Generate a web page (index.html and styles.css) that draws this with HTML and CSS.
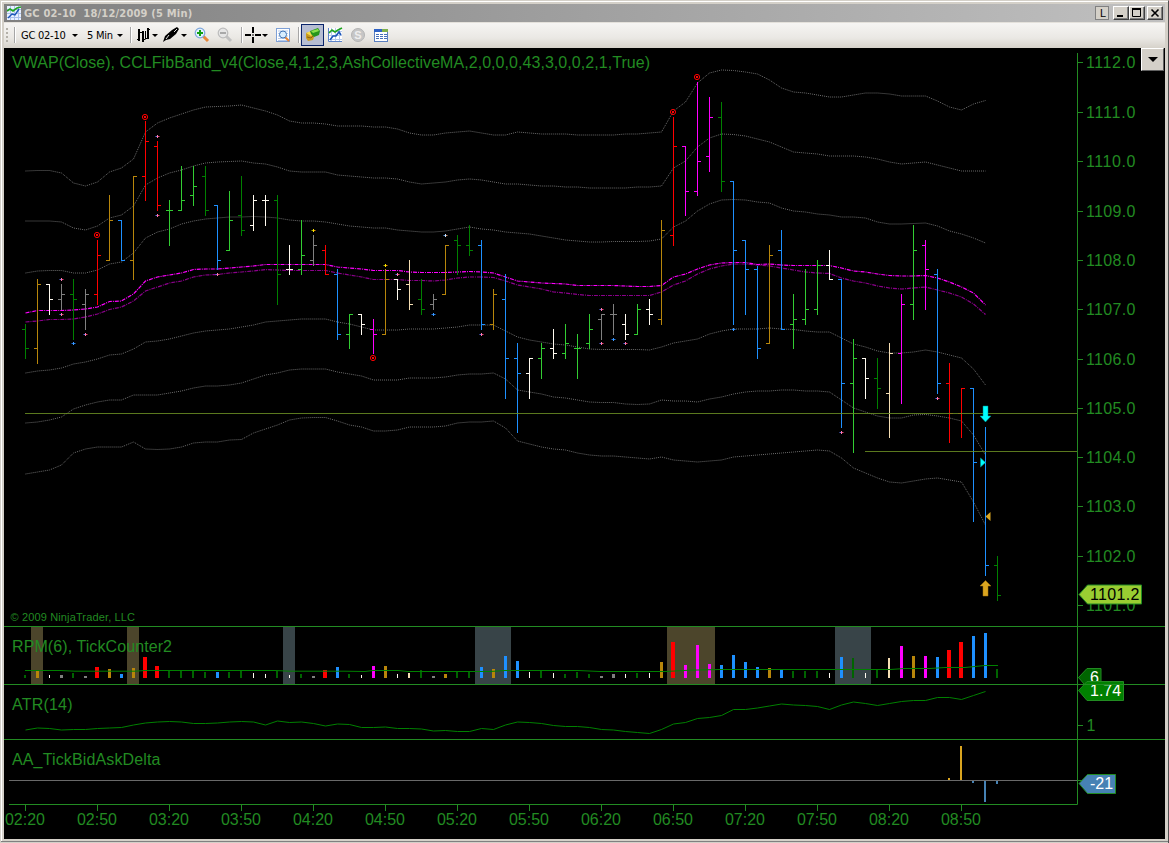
FILE: index.html
```html
<!DOCTYPE html>
<html lang="en">

<head>
    <meta charset="UTF-8">
    <meta name="viewport" content="width=device-width, initial-scale=1.0">
    <title>GC 02-10 18/12/2009 (5 Min)</title>
    <link rel="stylesheet" href="styles.css">
</head>

<body>

    <div class="window">

        <div class="titlebar">
            <svg class="title-icon" width="14" height="14" viewBox="0 0 14 14">
                <rect width="14" height="14" fill="#e8f0ff"/>
                <path d="M0 3.5h14M0 7.5h14M0 11.5h14M3.5 0v14M7.5 0v14M11.5 0v14" stroke="#a9c0ea" fill="none"/>
                <path d="M0 5l3-2 3 2 4-3 4-1" stroke="#1fa51f" stroke-width="1.6" fill="none"/>
                <path d="M1 12l4-4 3 1 4-6" stroke="#1c56b8" stroke-width="1.4" fill="none"/>
            </svg>
            <span class="title">GC 02-10&nbsp; 18/12/2009 (5 Min)</span>
            <div class="title-buttons">
                <span class="link-btn">L</span>
                <span class="win-btn"><svg width="12" height="10"><path d="M2 8h6" stroke="#000" stroke-width="2"/></svg></span>
                <span class="win-btn"><svg width="12" height="10"><path d="M1.5 1v7.5h8V1M1 1h9" stroke="#000" fill="none"/><path d="M1 1h9" stroke="#000" stroke-width="2"/></svg></span>
                <span class="win-btn close"><svg width="12" height="10"><path d="M2.5 1.5l7 7M9.5 1.5l-7 7" stroke="#000" stroke-width="1.6"/></svg></span>
            </div>
        </div>

        <div class="toolbar">
            <span class="grip"></span>
            <span class="sep sep-first"></span>
            <span class="label instrument">GC 02-10</span>
            <span class="arrow"></span>
            <span class="label interval">5 Min</span>
            <span class="arrow"></span>
            <span class="sep sep-wide"></span>
            <svg class="tool" width="15" height="16" viewBox="0 0 15 16">
                <path d="M3 2v12M7 4v11M12 1v11" stroke="#000" stroke-width="2" fill="none"/>
                <path d="M1 12.500h2M3 5.500h4M7 12.500h2M9.500 4v8.500M9 11.500h3M12 2.500h2" stroke="#000" fill="none"/>
            </svg>
            <span class="arrow"></span>
            <svg class="tool pen" width="17" height="16" viewBox="0 0 17 16">
                <path d="M0 15l2-6 7-6 5-3 2 2-3 5-6 5-4 1z" fill="#000"/>
                <path d="M3 12l3-4M11 5l3-3" stroke="#ddd"/>
            </svg>
            <span class="arrow"></span>
            <svg class="tool zoom-in" width="16" height="16" viewBox="0 0 16 16">
                <path d="M9 9l5 5" stroke="#e8873a" stroke-width="3"/>
                <circle cx="6" cy="6" r="4.800" fill="#e3f1ff" stroke="#7fa8dc" stroke-width="1.200"/>
                <path d="M3 6h6M6 3v6" stroke="#13a013" stroke-width="2"/>
            </svg>
            <svg class="tool gap" width="16" height="16" viewBox="0 0 16 16">
                <path d="M9 9l5 5" stroke="#c1c1c1" stroke-width="3"/>
                <circle cx="6" cy="6" r="4.800" fill="#e6e6e6" stroke="#bcbcbc" stroke-width="1.200"/>
                <path d="M3 6h6" stroke="#a9a9a9" stroke-width="2"/>
            </svg>
            <span class="sep sep-mid"></span>
            <svg class="tool" width="16" height="16" viewBox="0 0 16 16">
                <path d="M0 8h6M10 8h6M8 0v6M8 10v6" stroke="#000" stroke-width="2"/>
                <path d="M7 8h2" stroke="#000" stroke-width="1"/>
            </svg>
            <span class="arrow"></span>
            <svg class="tool zoom-in" width="16" height="16" viewBox="0 0 16 16">
                <rect x="1.500" y="1.500" width="13" height="13" fill="#fff" stroke="#7ea0d6"/>
                <path d="M3 4h10M3 6.500h10M3 9h10M3 11.500h10M3 13.500h10" stroke="#b7cbea"/>
                <path d="M10 10l4 4" stroke="#e8873a" stroke-width="2"/>
                <circle cx="8" cy="7.500" r="3.500" fill="#d9eeff" stroke="#3f74b8"/>
            </svg>
            <span class="sep sep-last"></span>
            <span class="pressed">
                <svg width="16" height="16" viewBox="0 0 16 16">
                    <path d="M1 6l6-2 3 3-2 6-5 1-2-3z" fill="#c99a1e"/>
                    <path d="M1 6l5-2 4 2-4 3z" fill="#f6dc4f"/>
                    <path d="M2 10l4 1 2-2" stroke="#8b6410" fill="none"/>
                    <path d="M5 4l8-3 2 3-1 4-5 2-3-3z" fill="#27951d"/>
                    <path d="M6 4l7-2 1 2-6 2z" fill="#8be04b"/>
                </svg>
            </span>
            <svg class="tool chart-icon" width="16" height="16" viewBox="0 0 16 16">
                <rect x="1" y="1" width="14" height="14" fill="#fff"/>
                <path d="M1 4.500h14M1 8.500h14M1 12.500h14M4.500 1v14M8.500 1v14M12.500 1v14" stroke="#b5c8ec" fill="none"/>
                <path d="M1.500 1v13.500H15" stroke="#5c83c9" fill="none"/>
                <path d="M2 6l3-3 3 2 3-2 4-2" stroke="#1fa51f" stroke-width="1.600" fill="none"/>
                <path d="M3 13l3-4 3 0 3-4 2 3" stroke="#1c56b8" stroke-width="1.600" fill="none"/>
            </svg>
            <svg class="tool gap" width="16" height="16" viewBox="0 0 16 16">
                <circle cx="8" cy="8" r="6.500" fill="#c6c6c6" stroke="#b4b4b4"/>
                <text class="dollar" x="8" y="12" text-anchor="middle">S</text>
            </svg>
            <svg class="tool gap" width="16" height="16" viewBox="0 0 16 16">
                <rect x="1.500" y="2.500" width="13" height="12" fill="#fff" stroke="#5a7fc0"/>
                <rect x="1" y="2" width="14" height="3" fill="#2f62c4"/>
                <rect x="9" y="2" width="6" height="3" fill="#7fb04a"/>
                <path d="M3 7.500h3M3 9.500h3M3 11.500h3M7 7.500h3M7 9.500h3M7 11.500h3M11 7.500h3M11 9.500h3M11 11.500h3" stroke="#4670b8"/>
            </svg>
        </div>

        <div class="chart-area">
            <!-- user units are window pixels -->
            <svg class="chart" width="1161" height="791" viewBox="4 48 1161 791">
                <g id="zones"></g>

                <g class="text">
                    <text x="12" y="68" textLength="638">VWAP(Close), CCLFibBand_v4(Close,4,1,2,3,AshCollectiveMA,2,0,0,0,43,3,0,0,2,1,True)</text>
                    <text x="12" y="652" textLength="160">RPM(6), TickCounter2</text>
                    <text x="12" y="710" textLength="60.500">ATR(14)</text>
                    <text x="12" y="765" textLength="148.500">AA_TickBidAskDelta</text>
                    <text class="copyright" x="10.500" y="621" textLength="124.500">© 2009 NinjaTrader, LLC</text>
                    <text x="1086.500" y="731">1</text>
                </g>

                <g id="bands"></g>
                <g id="bars"></g>
                <g id="rpm"></g>
                <g id="lines"></g>
                <g id="delta"></g>

                <path class="level" d="M25 413.500H1077M865 451.500H1077"/>
                <g id="markers"></g>

                <path d="M983 406h5v10h3l-5.500 6-5.500-6h3z" fill="#00ffff" stroke="#008b8b" stroke-width=".5"/>
                <path d="M980.500 458l5 4.500-5 4.500z" fill="#00ffff" stroke="#008b8b" stroke-width=".7"/>
                <path d="M990.500 512l-5 4.500 5 4.500z" fill="#daa520"/>
                <path d="M983 596h5v-10h3l-5.500-5.500-5.500 5.500h3z" fill="#daa520" stroke="#a87708" stroke-width=".5"/>

                <path class="zero" d="M9 780.500H1077"/>
                <path class="axis" d="M1077.500 53V804.500H9M1077 725.500h6M1077 780.500h6"/>
                <g id="axis"></g>

                <path class="tag last" d="M1079 594.500l8.500-9.500h54v19h-54z"/>
                <text class="tag-text dark" x="1090" y="600" textLength="49.500">1101.2</text>
                <path class="tag rpm" d="M1078.500 677.500l8.500-9h14v19h-14z"/>
                <text class="tag-text" x="1090" y="682.500">6</text>
                <path class="tag atr" d="M1078.500 690.500l8.500-9h36.500v19H1087z"/>
                <text class="tag-text" x="1090" y="696">1.74</text>
                <path class="tag delta" d="M1079 783.500l8.500-9h28v19h-28z"/>
                <text class="tag-text" x="1090" y="789">-21</text>
                <path class="axis" d="M4 626.500H1165M4 684.500H1165M4 739.500H1165"/>
            </svg>
            <span class="dropdown"><span class="arrow big"></span></span>
        </div>

    </div>

    <script src="script.js"></script>

</body>

</html>
```
FILE: styles.css
```css
html,
body {
    margin: 0;
    padding: 0;
    background: #d4d0c8;
    overflow: hidden;
}

.window {
    box-sizing: border-box;
    display: flex;
    flex-direction: column;
    width: 1169px;
    height: 843px;
    padding: 3px 3px 0;
    background: #d4d0c8;
    border-top: 1px solid #d4d0c8;
    border-left: 1px solid #d4d0c8;
    border-right: 1px solid #505050;
    box-shadow: inset 0 1px 0 #fff, inset 0 -1px 0 #d4d0c8, inset 0 -2px 0 #808080, inset 1px 0 0 #fff;
    font-family: "DejaVu Sans Condensed", "DejaVu Sans", sans-serif;
    font-size: 11px;
}

.titlebar {
    display: flex;
    align-items: center;
    height: 18px;
    padding: 0 2px 0 3px;
    background: linear-gradient(to right, #808080, #c0c0c0);
}

.title {
    flex: 1;
    margin-left: 3px;
    color: #d4d0c8;
    font-size: 11px;
    font-weight: bold;
    letter-spacing: .2px;
    white-space: nowrap;
}

.title-buttons {
    display: flex;
    align-items: center;
}

.link-btn {
    box-sizing: border-box;
    width: 14px;
    height: 14px;
    margin-right: 4px;
    padding-left: 2px;
    border: 1px solid #808080;
    background: #d4d0c8;
    font: 11px/13px "Liberation Sans", sans-serif;
    text-align: center;
}

.win-btn {
    box-sizing: border-box;
    display: flex;
    align-items: center;
    justify-content: center;
    width: 16px;
    height: 14px;
    background: #d4d0c8;
    border: 1px solid;
    border-color: #fff #404040 #404040 #fff;
    box-shadow: inset -1px -1px 0 #808080;
}

.win-btn.close {
    margin-left: 2px;
}

.toolbar {
    display: flex;
    align-items: center;
    height: 24px;
    padding-bottom: 1px;
    border-top: 1px solid #e4e1db;
    background: linear-gradient(#f6f5f3, #eae8e4 60%, #d6d2ca);
}

.grip {
    width: 2px;
    height: 14px;
    margin: 0 4px 0 2px;
    background: repeating-linear-gradient(#b3b0a8 0 2px, transparent 2px 4px);
}

.sep {
    width: 1px;
    height: 16px;
    background: #a6a6a6;
    box-shadow: 1px 0 0 #fff;
}

.sep-first {
    margin: 0 2px;
}

.sep-wide {
    margin: 0 5px 0 6px;
}

.sep-mid {
    margin: 0 3px 0 8px;
}

.sep-last {
    margin: 0 2px 0 7px;
}

.label {
    letter-spacing: -.25px;
    white-space: nowrap;
}

.instrument {
    width: 50px;
    padding-left: 4px;
}

.interval {
    width: 29px;
    padding-left: 8px;
}

.arrow {
    width: 0;
    margin: 0 1px;
    border: 3px solid transparent;
    border-top-color: #000;
    border-bottom: 0;
}

.tool {
    flex: none;
}

.pen {
    margin-left: 4px;
}

.zoom-in {
    margin-left: 6px;
}

.gap {
    margin-left: 7px;
}

.pressed {
    box-sizing: border-box;
    display: flex;
    align-items: center;
    justify-content: center;
    width: 23px;
    height: 22px;
    border: 1px solid #0a246a;
    background: #b6bdd2;
}

.chart-icon {
    margin-left: 3px;
}

.dollar {
    fill: #eee;
    font: bold 11px "Liberation Sans", sans-serif;
}

.chart-area {
    position: relative;
    height: 791px;
    background: #000;
}

.chart {
    display: block;
}

.chart text {
    font-family: "Liberation Sans", Arial, sans-serif;
    font-size: 16px;
}

.text text,
.axis-label {
    fill: #228b22;
}

.chart .copyright {
    font-size: 11px;
}

.axis {
    fill: none;
    stroke: #228b22;
}

.zero {
    stroke: #696969;
}

.level {
    stroke: #6b8e23;
    stroke-opacity: .85;
}

.band {
    fill: none;
    stroke: #6c6c6c;
    stroke-dasharray: 1 1;
}

.mean {
    fill: none;
    stroke: #f0f;
    stroke-width: 1.2;
    stroke-dasharray: 4 1 1 1;
}

.vwap {
    fill: none;
    stroke: #8b008b;
    stroke-width: 1.2;
    stroke-dasharray: 4 1 1 1;
}

.plot {
    fill: none;
    stroke: #008000;
}

.signal {
    fill: none;
    stroke: #f00;
}

.tag {
    stroke: #228b22;
}

.tag.last {
    fill: #9acd32;
}

.tag.rpm {
    fill: #006400;
}

.tag.atr {
    fill: #008000;
}

.tag.delta {
    fill: #4682b4;
}

.tag-text {
    fill: #fff;
}

.tag-text.dark {
    fill: #000;
}

.dropdown {
    position: absolute;
    top: 0;
    right: 1px;
    box-sizing: border-box;
    display: flex;
    align-items: center;
    justify-content: center;
    width: 23px;
    height: 23px;
    background: #d4d0c8;
    border: 1px solid;
    border-color: #fff #606060 #606060 #fff;
}

.arrow.big {
    border-width: 5px 5px 0;
}
```
FILE: script.js
```js
const colors = {
    g: "#008000", d: "#006400", o: "#b8860b", w: "#fffaf0", y: "#808080",
    r: "#ff0000", b: "#1e90ff", l: "#32cd32", m: "#ff00ff", n: "#f5deb3"
};

// x of the first bar and the distance between bars
const startX = 25;
const stepX = 12;
const barX = i => startX + i * stepX;

// color, high, low, open, close
const bars = `g 324 358 329 348|o 279 363 348 284|w 284 314 284 299|y 284 309 299 294|g 279 339 294 299
y 289 329 304 294|r 240 304 294 255|o 195 260 260 220|b 220 260 220 260|o 176 279 260 176
r 121 200 176 141|r 141 210 146 205|l 200 245 210 210|l 166 210 210 200|l 166 205 195 186
g 166 215 176 210|b 205 269 205 260|l 191 250 250 220|g 176 235 215 230|w 195 230 225 200
w 195 225 200 200|g 195 304 200 274|w 245 274 269 269|l 220 274 269 255|y 235 265 260 245
r 245 274 250 274|b 269 339 274 334|l 314 348 334 314|w 314 334 314 324|m 319 353 329 334
o 269 334 334 279|w 279 299 279 289|n 260 309 284 304|g 279 314 299 309|y 294 309 304 299
o 245 294 294 245|g 235 274 240 245|g 225 255 245 250|b 240 329 245 324|o 289 329 324 294
b 274 398 299 358|b 343 432 358 373|w 358 398 373 358|l 343 378 358 348|w 329 358 348 353
l 324 358 353 343|l 334 378 348 348|l 314 348 343 329|y 314 339 319 314|y 304 334 314 314
w 314 339 324 334|l 304 334 334 309|w 299 324 309 314|o 220 324 319 230|r 117 245 235 146
m 146 215 146 191|m 82 195 191 161|m 97 171 156 117|g 102 191 117 181|b 181 324 181 250
b 240 314 240 269|b 266 358 269 348|o 245 343 343 255|b 230 329 250 329|l 294 348 324 319
l 269 324 319 309|l 260 314 309 265|w 250 279 265 279|b 279 427 279 383|l 339 452 383 358
w 358 398 358 378|g 358 408 378 388|n 343 437 393 353|m 294 403 353 304|l 225 319 304 250
m 240 309 245 269|b 269 393 274 383|r 363 442 383 413|r 388 437 413 388|b 388 521 388 462
b 427 575 462 565|g 556 600 565 595`.split(/[|\n]/).map(row => row.split(" "));

const bands = [
    "171 170.500 170.500 173 183 186 182 172 168 159 132 123 118 114 110 107 106.500 106 105 108 111 115 121 123 123 124 126 126 126 127 127 129 133 135 135 133 132 131 133 135 135 132 133 134 134 134 135 135 135 135 134 134 133 132 111 102 83 73 70 70.500 72 74 80 88 92 93 95 97 97 95 93 93 94 96 96 96 101 107 110 104 100.500",
    "221 221 221 222 228 230 226 218 215 206 185 178 173 170 166 163 162 161.500 161 163 164 167 171 172 172 172 175 176 177 178 178 179 182 184 183 182 180 179 180 182 184 184 185 186 186 187 187 188 188 188 188 187 187 186 168 161 147 138 134 134.500 136 139 142 147 152 153 154 156 156 156 157 159 162 164 163 162 165 168 171 171 171",
    "273 271 270.500 270.500 273 273 270 264 262 253 238 232 229 224 221 219 218 217 217 216.500 217 218 220 221 221 222 224 226 227 228 228 230 231 232 232 231 229 227 229 230 232 233 234 236 238 240 241 242 242 241.500 241.500 241.500 241 239 227 221 211 204 200 199.500 200 202 203 208 211 212 214 215 217 217 218 222 224 224 223.500 223 226 231 234 238 243",
    "373 371 370 368 364 362 359 355 354 349 342 341 339 336 333 331 330 329 327 325 322 321 320 319 319 319 322 324 327 330 330 330 329 329 329 328 327 325 325 325 331 337 340 342 344 345 347 349 349.500 349.500 349.500 349.500 350 347 343 341 339 334 331 329 329 329 328 329 329.500 331 332 332 338 344 347 351 353 353 352 350 352 355 358 369 385",
    "423 422 420 417 409 405 402 400 400 395 395 395 393 391 388 386 386 385 383 379 375 373 370 369 369 369 372 374 376 380 380 380 378 378 378 377 375 374 374 373 379 390 392 394 397 398 400 402 402.500 402.500 404 404.500 404 400 401 401 402 399 397 394 392 391 391 390 390 391 391 392 400 408 412 416 418 418 415 414.500 416 418 421 435 455",
    "474 472 470 465 453 449 447 447 447 442 449 449.500 449 447 443 442 442 440 439.500 433 429 425 420 418 417.500 417.500 421 425 427 431 431 430 427 427 427 426 423 422 422 421 428 441 444 447 449 450 453 455 456 456 457 458 459 457 460 461 462 461 460 457 456 455 454 453 452 451 450 451 458 468 473 478 482 483 481 479 478 480 482 502 525"
];

const mean = "313 310.500 310.500 310.500 310 309 307 301.500 301 294 281 277 275 273 269.500 269 269 268 267 266 264.500 264.500 264.500 264.500 264.500 264.500 267 268 269 270.500 270.500 270.500 272 272.500 272.500 272.500 272 271.500 272 273 277 281 282 283 283.500 284 285.500 285.500 285.500 285.500 286 286.500 286.500 285.500 277 274 269 265 263 262.500 262.500 264.500 264 265 265.500 265.500 265.500 265.500 268 271 272 274 275.500 276 276 275.500 278 282 287 293 305";
const vwap = "322 321 319.500 319.500 319 317 314 309.500 307 301 291 287 283 281 277 275 274.500 273 272 271 269.500 270 270.500 270.500 270.500 270.500 273 275 277 279.500 279.500 279.500 280.500 280.500 281 280 278 277 277 277.500 281 285 287 289 292 293 294.500 295.500 295.500 295.500 295.500 295.500 295.500 292 285 281 274 269 266 264 264 265 266 268 270 272 273 273.500 278 281 283 286 288 289 288 287 290 293 297 304 314.500";
const atr = "730 728 728.500 730 729.500 729.500 728.500 728 727.500 725 723 722 721.500 722 723.500 723.500 723 722 721.500 722 725 721 722.500 722 723.500 726 724 724.500 727.500 727.500 727 728.500 728.500 729 731 730.500 731.500 731.500 728.500 729.500 725 722 722.500 723.500 725.500 726.500 726.500 727.500 729.500 730 731.500 732.500 733.500 729.500 724 722.500 718.500 717.500 715.500 709.500 709.500 708 706 704 705 705.500 706.500 709.500 705 702 703.500 705.500 703.500 701.500 700.500 700.500 697.500 697.500 699.500 695.500 691.500";

// color and top of each tick counter bar
const rpm = `d675 o670 w675 y675 d673 y676 r667 o669 b674 o668 r657 r666 d671 d671 d671 d672 b672 d672 d671 w673
w674 d671 w675 d674 y676 r670 b667 d674 w675 m666 o666 w674 n673 d670 y676 o674 d671 d671 b667 o669
b656 b661 w672 d670 w673 d674 d672 d674 y676 y674 w674 d673 w673 o662 r642 m665 m645 m664 b665 b655
b662 b667 o668 b670 d671 d671 d671 w673 b657 d658 w673 d670 n658 m646 o656 m656 b657 r650 r642 b636
b633 d669`.split(/\s+/);
const rpmBottom = 678;
const rpmWidths = { r: 4, w: 1, d: 2, n: 2 };

const rect = (x, y, w, h, fill) => `<rect x="${x}" y="${y}" width="${w}" height="${h}" fill="${fill}"/>`;

function fillGroup(id, html) {
    document.getElementById(id).innerHTML = html;
}

function polyline(values, className) {
    const points = values.split(" ").map((y, i) => `${barX(i) + 0.5},${y}`).join(" ");
    return `<polyline class="${className}" points="${points}"/>`;
}

// shaded zones behind the tick counter
fillGroup("zones", [
    [31, 12, "#4c452b"], [127, 12, "#4c452b"], [283, 12, "#384448"],
    [475, 36, "#384448"], [667, 48, "#4c452b"], [835, 36, "#384448"]
].map(z => rect(z[0], 627, z[1], 57, z[2])).join(""));

fillGroup("bands", bands.map(b => polyline(b, "band")).join("") + polyline(vwap, "vwap") + polyline(mean, "mean"));

fillGroup("bars", bars.map(([c, high, low, open, close], i) => {
    const x = barX(i);
    return rect(x, high, 1, low - high + 1, colors[c]) +
        rect(x - 3, open, 3, 1, colors[c]) +
        rect(x + 1, close, 3, 1, colors[c]);
}).join(""));

fillGroup("rpm", rpm.map((item, i) => {
    const c = item[0];
    const top = Number(item.slice(1));
    const w = rpmWidths[c] || 3;
    const x = w === 4 ? barX(i) - 2 : w === 1 ? barX(i) : barX(i) - 1;
    return rect(x, top, w, rpmBottom - top, colors[c]);
}).join(""));

fillGroup("lines", polyline(atr, "plot") +
    `<polyline class="plot" points="25,670.5 60,670.5 75,671.2 135,671.2 145,670.5 275,670.5 290,671.2 345,671.2 365,671.5 373,670.5 398,670.5 408,671.5 490,671.5 505,670.5 578,670.5 600,671.5 665,671.5 690,670.2 720,669.5 890,669.5 905,668.5 930,668.5 945,667.5 965,667.5 985,665.5 998,665.5"/>`);

fillGroup("delta", rect(948, 778, 2, 2, "#daa520") + rect(960, 746, 2, 34, "#daa520") +
    rect(972, 780, 2, 3, "#4682b4") + rect(984, 780, 2, 22, "#4682b4") + rect(996, 780, 2, 4, "#4682b4"));

// small plus markers: left, centre and right colors
const plus = {
    pink: ["#5a6fe8", "#ff7fb0", "#f04070"],
    blue: ["#1e70d8", "#3f9cff", "#1e80f0"],
    gold: ["#b0b000", "#ffe800", "#f09000"],
    pale: ["#5898e0", "#cfe8ff", "#d09070"]
};
const markers = [
    [61, 279, "pink"], [61, 314, "pink"], [85, 334, "pink"], [157, 136, "pink"], [157, 215, "pink"],
    [217, 274, "pink"], [397, 274, "pink"], [481, 334, "pink"], [601, 309, "pink"], [601, 343, "pink"],
    [625, 343, "pink"], [841, 432, "pink"], [937, 398, "pink"], [73, 343, "blue"], [433, 314, "blue"],
    [613, 339, "blue"], [733, 329, "blue"], [313, 230, "gold"], [385, 265, "gold"], [445, 235, "pale"]
];
const signals = [[145, 117], [97, 235], [373, 358], [673, 112], [697, 77]];

fillGroup("markers", markers.map(([x, y, name]) => {
    const [left, mid, right] = plus[name];
    return rect(x - 1.5, y, 1.5, 1, left) + rect(x, y - 1, 1, 3, mid) + rect(x + 1, y, 1.5, 1, right);
}).join("") + signals.map(([x, y]) =>
    `<circle class="signal" cx="${x}" cy="${y}" r="2.6"/>` + rect(x - 1, y - 1, 2, 2, "#ff0000")
).join(""));

// price and time axes
let axis = "";
const priceY = [62, 112, 161, 211, 260, 309, 359, 408, 457, 506, 556, 605];
priceY.forEach((y, i) => {
    axis += `<path class="axis" d="M1077 ${y + 0.5}h6"/><text class="axis-label" x="1086" y="${y + 6}" textLength="49.5">${1112 - i}.0</text>`;
});
for (let i = 0; i < 14; i++) {
    const minutes = 140 + i * 30;
    const label = "0" + Math.floor(minutes / 60) + ":" + (minutes % 60);
    const x = startX + i * 72;
    axis += `<path class="axis" d="M${x + 0.5} 805v6"/><text class="axis-label" x="${x}" y="825" text-anchor="middle">${label}</text>`;
}
fillGroup("axis", axis);
```
